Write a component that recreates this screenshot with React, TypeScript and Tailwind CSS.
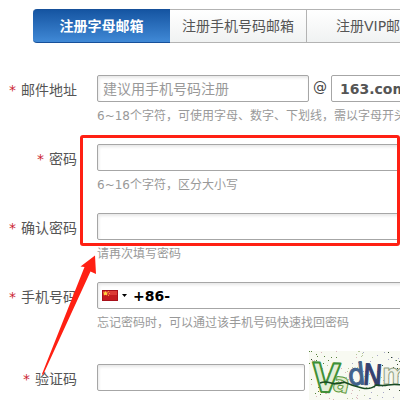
import React, { useState } from 'react';

interface RowProps {
  id: string;
  label: string;
  hint?: string;
  children: React.ReactNode;
}

const boxClass =
  'block h-[27px] rounded-[2px] border border-[#a6a6a6] bg-white text-sm text-[#333] shadow-[inset_1px_2px_3px_#e8e8e8] outline-none placeholder:text-[#999] placeholder:opacity-100';

const FieldLabel = ({ id, label }: { id: string; label: string }) => (
  <label htmlFor={id} className="flex h-[30px] w-[77px] shrink-0 items-center justify-end whitespace-nowrap text-sm text-[#555]">
    <span className="mr-[5px] text-[#cc1f33]">*</span>
    {label}
  </label>
);

const Row: React.FC<RowProps> = ({ id, label, hint, children }) => (
  <div className="flex h-[69px]">
    <FieldLabel id={id} label={label} />
    <div className="ml-5 shrink-0">
      <div className="flex items-center">{children}</div>
      {hint && <p className="mt-[5px] whitespace-nowrap text-xs leading-[18px] text-[#999]">{hint}</p>}
    </div>
  </div>
);

const Flag = () => (
  <svg width="16" height="11" viewBox="0 0 16 11" className="shrink-0">
    <rect width="16" height="11" fill="#a8101a" />
    <rect x="1" y="1" width="14" height="9" fill="#dc3a35" />
    <path d="M1 5h14v5H1z" fill="#c41c20" />
    <path d="M3.5 1l.8 1.500 1.700.1-1.200 1.200.3 1.700-1.600-.8-1.600.8.3-1.700L1 2.600l1.700-.1z" fill="#ffdc3c" />
    <path d="M6 1h1v1H6zM7 3h1v1H7zM6 5h1v1H6z" fill="#f5a52c" />
  </svg>
);

const specks = Array.from({ length: 170 }, (_, i) => ({
  x: (i * 47 + ((i * i * 13) % 31)) % 118,
  y: (i * 29 + ((i * i * 7) % 23)) % 49,
  color: ['#57823c', '#b8c89c', '#33472d', '#d9b5ba', '#a8a9c9'][i % 5],
}));

const Captcha = () => (
  <svg width="120" height="49" viewBox="0 0 120 49" className="ml-1 block shrink-0" role="img" aria-label="验证码">
    <rect width="120" height="49" fill="#f8faf2" />
    {specks.map((s, i) => (
      <rect key={i} x={s.x} y={s.y} width="1" height="1" fill={s.color} />
    ))}
    <g fontFamily="'DejaVu Sans Condensed', 'DejaVu Sans', sans-serif" strokeLinejoin="round">
      <text x="3" y="41" fontSize="40" fontWeight="bold" fill="#e4eed8" stroke="#3f9137" strokeWidth="2" transform="rotate(3 16 25)">V</text>
      <text x="24" y="41" fontSize="27" fontWeight="bold" fill="#e2edcf" stroke="#5f9c42" strokeWidth="1" transform="rotate(12 32 34)">a</text>
      <text x="39" y="34" fontSize="30" fill="#41628c" stroke="#41628c" strokeWidth="1" transform="rotate(-6 46 24)">d</text>
      <text x="54" y="34" fontSize="29" fill="#34416f" stroke="#34416f" strokeWidth="1" transform="rotate(4 62 24)">N</text>
      <text x="73" y="33" fontSize="29" fontWeight="bold" fill="#eef1e6" stroke="#93a485" strokeWidth="1">m</text>
    </g>
    <path d="M11 32q5-2 11 0t13-1q9 4 18 6t14-3q7 1 12 0t15 0 26-2" fill="none" stroke="#174a22" strokeWidth="1.5" />
  </svg>
);

const tabs = ['注册字母邮箱', '注册手机号码邮箱', '注册VIP邮箱'];

export default function App() {
  const [active, setActive] = useState(0);

  return (
    <main className="relative h-screen overflow-hidden bg-white pt-[9px] font-['DejaVu_Sans','Noto_Sans_CJK_SC',sans-serif]">
      <nav className="ml-[33px] flex h-[34px]">
        {tabs.map((tab, i) => (
          <button
            key={tab}
            type="button"
            onClick={() => setActive(i)}
            className={`w-[137px] shrink-0 whitespace-nowrap border-y text-sm first:rounded-l last:rounded-r ${
              i === active
                ? 'border-[#16509a] bg-linear-to-b from-[#1555a2] to-[#4089d6] font-bold text-white'
                : 'border-r border-[#b3b3b3] bg-linear-to-b from-white to-[#f0f2f2] text-[#555]'
            }`}
          >
            {tab}
          </button>
        ))}
      </nav>

      <form className="mt-8">
        <Row id="mail" label="邮件地址" hint="6~18个字符，可使用字母、数字、下划线，需以字母开头">
          <input id="mail" type="text" placeholder="建议用手机号码注册" className={`${boxClass} w-[212px] px-[5px]`} />
          <span className="w-[22px] pb-1 text-center text-sm leading-5 text-[#444]">@</span>
          <select
            aria-label="邮箱域名"
            className="h-[27px] w-[100px] appearance-none rounded-[2px] border border-[#a6a6a6] bg-white px-2 text-sm font-bold text-[#555]"
          >
            <option>163.com</option>
            <option>126.com</option>
            <option>yeah.net</option>
          </select>
        </Row>

        <div className="relative">
          <Row id="password" label="密码" hint="6~16个字符，区分大小写">
            <input id="password" type="password" className={`${boxClass} w-[334px] px-[5px]`} />
          </Row>
          <Row id="confirm" label="确认密码" hint="请再次填写密码">
            <input id="confirm" type="password" className={`${boxClass} w-[334px] px-[5px]`} />
          </Row>
          <div className="pointer-events-none absolute -top-[9px] right-0 bottom-9 left-20 rounded-[3px] border-3 border-[#ff2013]" />
          <svg width="57" height="122" viewBox="0 0 57 122" className="pointer-events-none absolute top-[111px] left-10 z-10">
            <path d="M55 .5L40.500 11.500l4 .5L2 119l1 1L50.500 16.500 56 19z" fill="#ff2013" />
          </svg>
        </div>

        <Row id="phone" label="手机号码" hint="忘记密码时，可以通过该手机号码快速找回密码">
          <div className={`${boxClass} w-[334px] px-1`}>
            <div className="flex h-full items-center">
              <button type="button" aria-label="国家和地区" className="flex items-center gap-1">
                <Flag />
                <svg width="5" height="3" viewBox="0 0 5 3">
                  <path d="M0 0h5L2.500 3z" fill="#000" />
                </svg>
              </button>
              <span className="ml-1.5 font-bold text-black">+86-</span>
              <input id="phone" type="tel" className="min-w-0 flex-1 bg-transparent outline-none" />
            </div>
          </div>
        </Row>

        <div className="mt-[13px] flex">
          <FieldLabel id="code" label="验证码" />
          <input id="code" type="text" className={`${boxClass} ml-5 w-[208px] shrink-0 px-[5px]`} />
          <div className="-mt-[13px] shrink-0">
            <Captcha />
          </div>
        </div>
      </form>
    </main>
  );
}
